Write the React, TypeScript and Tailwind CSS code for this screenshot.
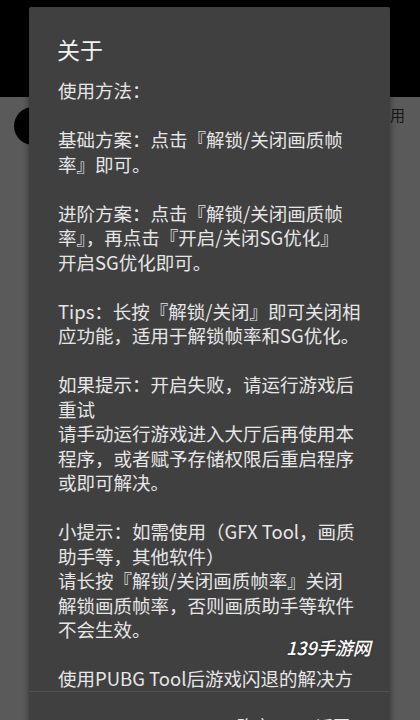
const LINES: string[] = [
  '使用方法：',
  '',
  '基础方案：点击『解锁/关闭画质帧',
  '率』即可。',
  '',
  '进阶方案：点击『解锁/关闭画质帧',
  '率』，再点击『开启/关闭SG优化』',
  '开启SG优化即可。',
  '',
  'Tips：长按『解锁/关闭』即可关闭相',
  '应功能，适用于解锁帧率和SG优化。',
  '',
  '如果提示：开启失败，请运行游戏后',
  '重试',
  '请手动运行游戏进入大厅后再使用本',
  '程序，或者赋予存储权限后重启程序',
  '或即可解决。',
  '',
  '小提示：如需使用（GFX Tool，画质',
  '助手等，其他软件）',
  '请长按『解锁/关闭画质帧率』关闭',
  '解锁画质帧率，否则画质助手等软件',
  '不会生效。',
  '',
  '使用PUBG Tool后游戏闪退的解决方',
]

const font = { fontFamily: '"Noto Sans CJK SC", "Noto Sans", sans-serif' }

export default function App() {
  return (
    <div className="relative h-[720px] w-[420px] overflow-hidden bg-[#5a5a5a]" style={font}>
      {/* dimmed app behind the dialog */}
      <div className="h-[97px] bg-black" />
      <div className="flex items-start justify-between pl-[14px] pr-[15px] pt-[10px]">
        <div className="flex h-[38px] w-[38px] items-center justify-center rounded-full bg-black">
          <span className="text-[14px] font-bold text-[#bbbbbb]">6</span>
        </div>
        <span className="text-[15px] leading-[16px] text-[#151515]">用</span>
      </div>

      {/* dialog */}
      <div className="absolute left-[29px] top-[7px] flex h-[760px] w-[361px] flex-col rounded-[2px] bg-[#404040] shadow-[0_0_6px_rgba(0,0,0,0.45)]">
        <div className="px-[28px] pb-[14px] pt-[27px]">
          <h1 className="text-[23px] leading-[30px] text-[#f2f2f2]">关于</h1>
        </div>
        <div className="h-[613px] overflow-hidden px-[29px] text-[18.5px] leading-[24.5px] text-[#e6e6e6]">
          {LINES.map((line, i) => (
            <div key={i} className="h-[24.5px] whitespace-nowrap">
              {line}
            </div>
          ))}
        </div>
        <div className="h-px bg-[#505050]" />
        <div className="flex justify-end gap-[45px] pr-[40px] pt-[22px] text-[17px] leading-[24px] text-[#e6e6e6]">
          <span>确定</span>
          <span>返回</span>
        </div>
      </div>

      {/* watermark */}
      <div className="absolute left-[286px] top-[635px] text-[18px] font-medium italic leading-[24px] text-white [text-shadow:0_0_2px_rgba(0,0,0,0.5)]">
        139手游网
      </div>
    </div>
  )
}
